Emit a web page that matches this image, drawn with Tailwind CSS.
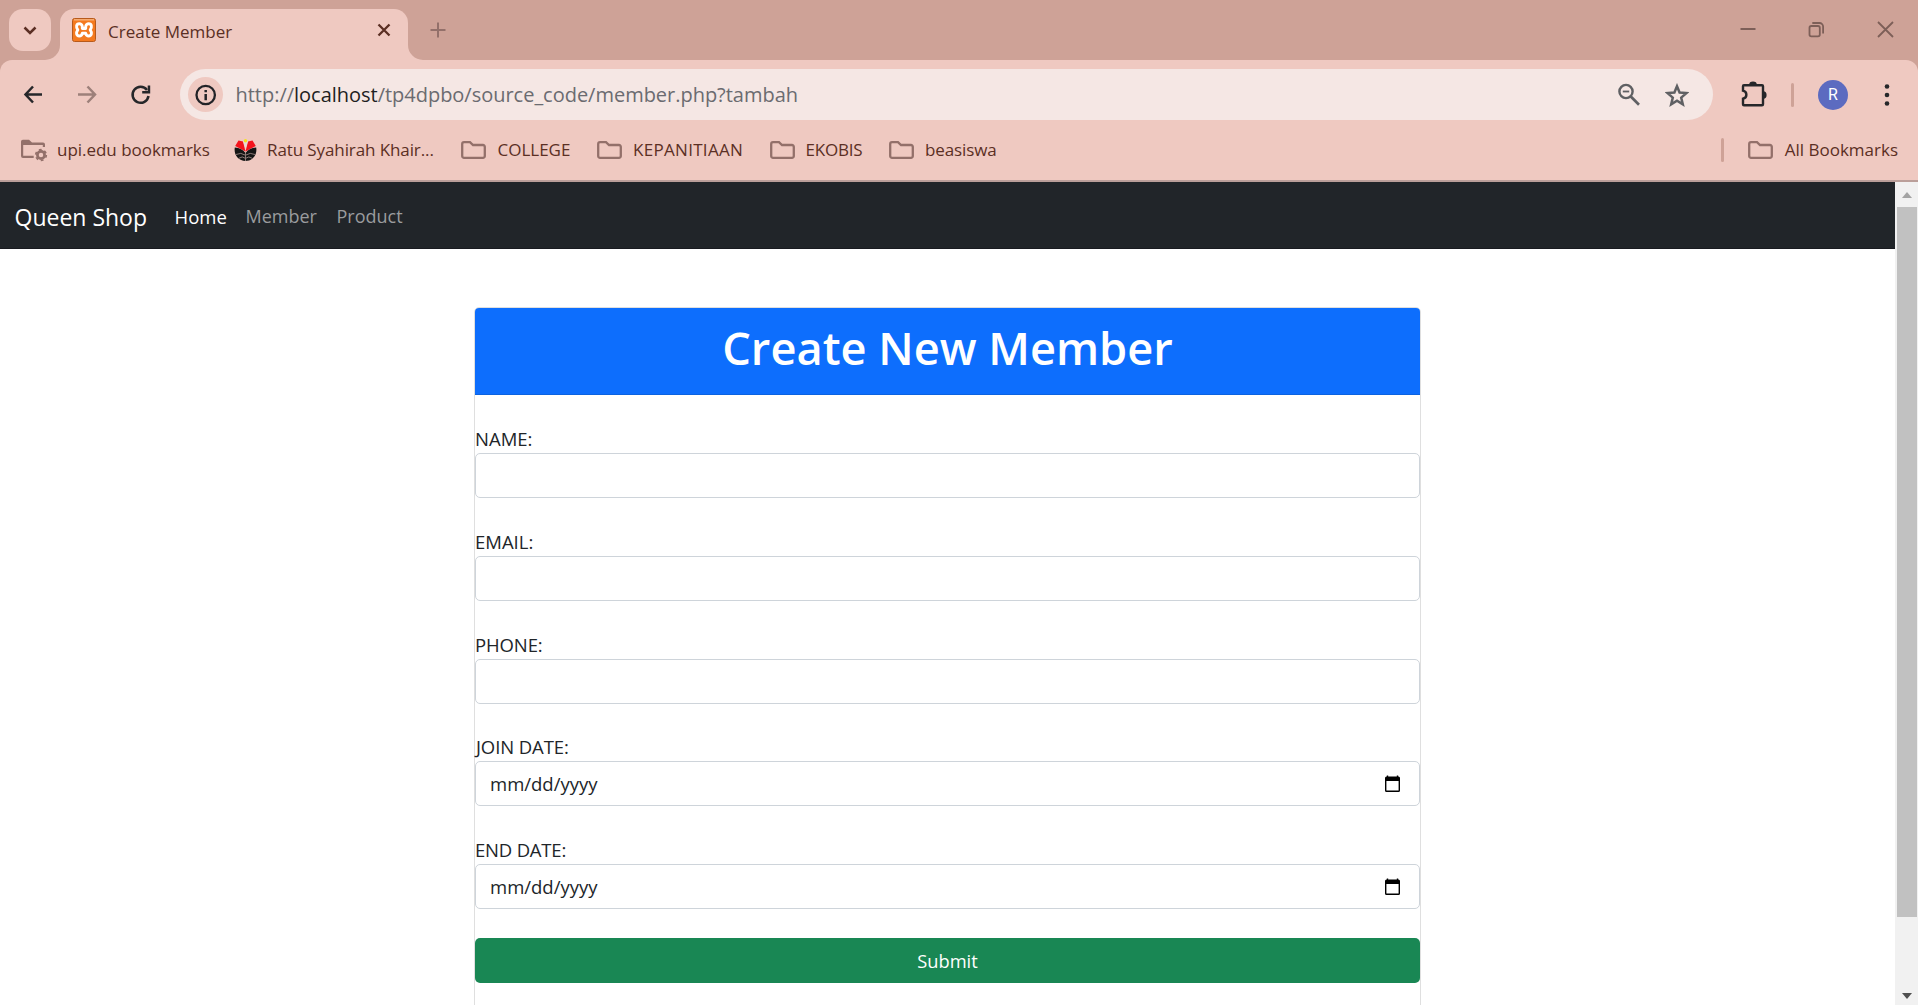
<!DOCTYPE html>
<html lang="en">
<head>
<meta charset="utf-8">
<title>Create Member</title>
<script src="https://cdn.jsdelivr.net/npm/@tailwindcss/browser@4"></script>
</head>
<body class="h-[1005px] w-[1918px] overflow-hidden bg-white font-['Open_Sans',sans-serif] whitespace-nowrap">
<svg class="hidden">
  <symbol id="folder" viewBox="0 0 25 18"><path d="M3 1.2h6l3 2.8h10a1.8 1.8 0 0 1 1.8 1.8V15a1.8 1.8 0 0 1-1.8 1.8H3A1.8 1.8 0 0 1 1.2 15V3A1.8 1.8 0 0 1 3 1.2z" fill="none" stroke="#93706a" stroke-width="2.3"/></symbol>
  <symbol id="calendar" viewBox="0 0 15 18"><path d="M2.5.5v2M12.5.5v2" stroke="#000" stroke-width="1.4"/><path d="M1.500 1.500h12A1.500 1.500 0 0 1 15 3v12.500a1.500 1.500 0 0 1-1.500 1.500h-12A1.500 1.500 0 0 1 0 15.500V3a1.500 1.500 0 0 1 1.500-1.500zM1.400 6v9.600h12.200V6z" fill="#000" fill-rule="evenodd"/></symbol>
</svg>

<!-- Browser tab strip -->
<header class="flex h-[60px] items-start bg-[#cea297] pt-[9px] pl-[9px]">
  <button class="flex size-[42px] items-center justify-center rounded-[14px] bg-[#efc9c1]">
    <svg class="size-[14px]" viewBox="0 0 14 14"><path d="M1.500 4.500 7 10l5.500-5.500" fill="none" stroke="#5b2f24" stroke-width="2.500"/></svg>
  </button>
  <svg class="mt-[36px] ml-[-6px] h-[15px] w-[15px]" viewBox="0 0 15 15"><path d="M15 0v15H0A15 15 0 0 0 15 0z" fill="#efc9c1"/></svg>
  <div class="flex h-[51px] w-[348px] items-start rounded-t-[14px] bg-[#efc9c1] pl-3">
    <svg class="mt-[9px] size-[24px]" viewBox="0 0 24 24">
      <rect x=".5" y=".5" width="23" height="23" rx="2" fill="#f47a20" stroke="#b75a1c"/><path d="M2 1.800h20" stroke="#f8b27a" stroke-width="1.400"/>
      <path d="M10.300 8.300Q9.600 5.800 7.300 5.800C4.200 5.800 3.800 9 5.800 11.900 3.800 14.800 4.200 18 7.300 18Q9.600 18 10.300 15.300h3.400Q14.400 18 16.700 18c3.100 0 3.500-3.200 1.500-6.100 2-2.900 1.600-6.100-1.500-6.100q-2.300 0-3 2.500v2.200h-3.400z" fill="none" stroke="#fff" stroke-width="2.900" stroke-linejoin="round"/>
    </svg>
    <span class="mt-[9px] ml-[12px] w-[269px] text-[17px] leading-[28px] text-[#5b2f24]">Create Member</span>
    <svg class="mt-[14px] size-[14px] shrink-0" viewBox="0 0 14 14"><path d="m1.500 1.500 11 11m0-11-11 11" stroke="#5b2f24" stroke-width="2.300"/></svg>
  </div>
  <svg class="mt-[36px] size-[15px]" viewBox="0 0 15 15"><path d="M0 0v15h15A15 15 0 0 1 0 0z" fill="#efc9c1"/></svg>
  <svg class="mt-[13px] ml-[7px] size-[16px]" viewBox="0 0 16 16"><path d="M8 .5v15M.5 8h15" stroke="#93706a" stroke-width="2"/></svg>
  <div class="mr-[24px] ml-auto flex gap-[52px] pt-[12px] text-[#7d5f58]">
    <svg class="size-[17px]" viewBox="0 0 17 17"><path d="M1.500 8h15" stroke="currentColor" stroke-width="2"/></svg>
    <svg class="size-[17px]" viewBox="0 0 17 17" fill="none" stroke="currentColor" stroke-width="1.800"><rect x="1.500" y="5" width="10.300" height="10.300" rx="1.800"/><path d="M4.300 2h7.200a3.600 3.600 0 0 1 3.600 3.600v7"/></svg>
    <svg class="size-[17px]" viewBox="0 0 17 17"><path d="m1 1 15 15m0-15L1 16" stroke="currentColor" stroke-width="1.800"/></svg>
  </div>
</header>

<!-- Toolbar and bookmarks bar -->
<section class="bg-[#cea297]">
  <div class="h-[122px] rounded-t-[12px] border-b-2 border-[#bb9f9a] bg-[#efc9c1]">
    <div class="flex h-[69px] items-center">
      <svg class="ml-[23px] size-[20px]" viewBox="0 0 20 20"><path d="M10 1.500 2.500 9.500l7.500 8M2.500 9.500H19" fill="none" stroke="#26272a" stroke-width="2.500"/></svg>
      <svg class="ml-[34px] size-[20px]" viewBox="0 0 20 20"><path d="m10.500 1.500 7.500 8-7.500 8M18 9.500H1" fill="none" stroke="#9d807a" stroke-width="2.500"/></svg>
      <svg class="ml-[33px] size-[22px]" viewBox="0 0 22 22"><path d="M18.500 12A8 8 0 1 1 17 6" fill="none" stroke="#26272a" stroke-width="2.500"/><path d="M20.200 1.500v8h-8V7h5.500V1.500z" fill="#26272a"/></svg>
      <div class="ml-[28px] flex h-[51px] w-[1533px] items-center rounded-full bg-[#f5e7e4]">
        <span class="ml-[8px] flex size-[35px] items-center justify-center rounded-full bg-[#efc9c1]">
          <svg class="size-[22px]" viewBox="0 0 22 22"><circle cx="10.700" cy="11" r="9.200" fill="none" stroke="#222327" stroke-width="2.300"/><path d="M10.700 10v6.200M10.700 6v2.200" stroke="#222327" stroke-width="2.500"/></svg>
        </span>
        <span class="ml-[12.500px] text-[20px] leading-[28px] tracking-[-0.02px] text-[#6b6b70]">http://<span class="text-[#1f1f22]">localhost</span>/tp4dpbo/source_code/member.php?tambah</span>
        <svg class="mr-[24px] ml-auto size-[24px]" viewBox="0 0 24 24" fill="none" stroke="#5f6063"><circle cx="9" cy="8.500" r="6.600" stroke-width="2.400"/><path d="m13.800 13.500 8.200 8.200" stroke-width="2.700"/><path d="M5.800 8.500h6.400" stroke-width="1.800"/></svg>
        <svg class="mr-[24px] size-[24px]" viewBox="0 0 24 24"><path d="m12 3.200 2.600 6.300 6.800.6-5.200 4.500 1.600 6.700-5.800-3.600-5.800 3.600 1.600-6.700-5.200-4.500 6.800-.6z" fill="none" stroke="#5f6063" stroke-width="2.500"/></svg>
      </div>
      <svg class="ml-[27px] size-[28px]" viewBox="0 0 28 28"><path d="M4 4.200h18a1 1 0 0 1 1 1v18a1 1 0 0 1-1 1H4a1 1 0 0 1-1-1v-5.500c4.500-1 4.500-7 0-8V5.200a1 1 0 0 1 1-1z" fill="none" stroke="#26272a" stroke-width="2.400"/><path d="M9.200 3.700a3.800 3.300 0 0 1 7.600 0zM23.300 10.300a3.300 3.800 0 0 1 0 7.600z" fill="#26272a"/></svg>
      <span class="ml-[23px] h-[24px] w-[3px] rounded-full bg-[#cea297]"></span>
      <span class="ml-[24px] flex size-[30px] items-center justify-center rounded-full bg-[#5c6bc0] font-[Roboto] text-[16px] text-white">R</span>
      <svg class="ml-[34px] h-[24px] w-[10px]" viewBox="0 0 10 24" fill="#26272a"><circle cx="5" cy="3.500" r="2.300"/><circle cx="5" cy="12" r="2.300"/><circle cx="5" cy="20.500" r="2.300"/></svg>
    </div>
    <div class="flex h-[42px] items-center text-[17px] leading-[24px] text-[#5b2f24]">
      <div class="flex w-[213px] items-center pl-[20px]">
        <svg class="mt-[2px] h-[24px] w-[28px]" viewBox="0 0 28 24"><path d="M1 2.500A1.800 1.800 0 0 1 2.800.8H9L12 3.500h11a2 2 0 0 1 2 2V8h-2.200V6H3.200v10.800h10.500V19H3a2 2 0 0 1-2-2z" fill="#93706a"/><circle cx="21" cy="16" r="3.600" fill="none" stroke="#93706a" stroke-width="2.700"/><circle cx="21" cy="16" r="5.300" fill="none" stroke="#93706a" stroke-width="1.700" stroke-dasharray="2.780"/></svg>
        <span class="ml-[9px] tracking-[-0.03px]">upi.edu bookmarks</span>
      </div>
      <div class="flex w-[248px] items-center pl-[21px]">
        <svg class="size-[23px]" viewBox="0 0 23 23"><path d="M4.500 1.500 9 2.500l2.500 10L1.200 7zM18.500 1.500 14 2.500l-2.500 10L21.800 7z" fill="#f3141d"/><path d="m9 2 2.500 8L14 2z" fill="#e9d9d4"/><circle cx="11.500" cy="1.800" r="1.700" fill="#f4e31d"/><path d="M.8 8.500Q8 9 11.500 14 15 9 22.200 8.500C23.500 16 18.500 22 11.500 22S-.5 16 .8 8.500z" fill="#151515"/><path d="M2 15.500q5-2.500 9 .5M5 19.200q3.500-2.500 6 0M21 15.500q-5-2.500-9 .5M18 19.200q-3.500-2.500-6 0M11.500 14v8" fill="none" stroke="#a8938e" stroke-width=".8"/></svg>
        <span class="ml-[10px] tracking-[-0.1px]">Ratu Syahirah Khair...</span>
      </div>
      <div class="flex w-[135.500px] items-center"><svg class="h-[18px] w-[25px]"><use href="#folder"/></svg><span class="ml-[11.500px]">COLLEGE</span></div>
      <div class="flex w-[173px] items-center"><svg class="h-[18px] w-[25px]"><use href="#folder"/></svg><span class="ml-[11.500px] tracking-[0.3px]">KEPANITIAAN</span></div>
      <div class="flex w-[119.500px] items-center"><svg class="h-[18px] w-[25px]"><use href="#folder"/></svg><span class="ml-[11px] tracking-[-0.2px]">EKOBIS</span></div>
      <div class="flex items-center"><svg class="h-[18px] w-[25px]"><use href="#folder"/></svg><span class="ml-[11px] tracking-[-0.1px]">beasiswa</span></div>
      <div class="mr-[20px] ml-auto flex items-center"><span class="mr-[24px] h-[24px] w-[3px] rounded-full bg-[#cea297]"></span><svg class="h-[18px] w-[25px]"><use href="#folder"/></svg><span class="ml-[12px]">All Bookmarks</span></div>
    </div>
  </div>
</section>

<!-- Page viewport -->
<div class="flex h-[823px]">
  <main class="w-[1895px] overflow-hidden bg-white">
    <nav class="flex h-[67px] items-center border-b border-[#191b20] bg-[#212529] text-[18px]">
      <a class="mt-[5px] ml-[14.500px] w-[160px] text-[23px] text-white">Queen Shop</a>
      <a class="mt-[3px] w-[71px] text-[18.500px] text-white">Home</a>
      <a class="mt-[3px] w-[91px] text-[#9a9c9e]">Member</a>
      <a class="mt-[3px] text-[#9a9c9e]">Product</a>
    </nav>
    <form class="mx-auto mt-[58px] h-[900px] w-[947px] rounded-[5px] border border-[#dfdfdf] text-[#212529]">
      <h1 class="h-[87.250px] rounded-t-[4px] border-b border-[#0c63e0] bg-[#0d6efd] pt-[10px] text-center text-[45.200px] leading-[60px] font-semibold text-white">Create New Member</h1>
      <div class="grid auto-rows-[102.750px]">
        <div class="flex flex-col justify-end text-[18.500px]"><label class="leading-[29px]">NAME:</label><div class="h-[45px] rounded-[5px] border border-[#ced4da] bg-white"></div></div>
        <div class="flex flex-col justify-end text-[18.500px]"><label class="leading-[29px]">EMAIL:</label><div class="h-[45px] rounded-[5px] border border-[#ced4da] bg-white"></div></div>
        <div class="flex flex-col justify-end text-[18.500px]"><label class="leading-[29px] tracking-[-0.1px]">PHONE:</label><div class="h-[45px] rounded-[5px] border border-[#ced4da] bg-white"></div></div>
        <div class="flex flex-col justify-end text-[18.500px]"><label class="pl-[1px] leading-[29px] tracking-[-0.1px]">JOIN DATE:</label><div class="flex h-[45px] items-center justify-between rounded-[5px] border border-[#ced4da] bg-white pr-[19px] pl-[14px]"><span class="pt-px">mm/dd/yyyy</span><svg class="h-[18px] w-[15px]"><use href="#calendar"/></svg></div></div>
        <div class="flex flex-col justify-end text-[18.500px]"><label class="leading-[29px] tracking-[-0.2px]">END DATE:</label><div class="flex h-[45px] items-center justify-between rounded-[5px] border border-[#ced4da] bg-white pr-[19px] pl-[14px]"><span class="pt-px">mm/dd/yyyy</span><svg class="h-[18px] w-[15px]"><use href="#calendar"/></svg></div></div>
      </div>
      <button type="button" class="mt-[29px] block h-[45px] w-full rounded-[5px] bg-[#198754] pt-px text-[18.300px] text-white">Submit</button>
    </form>
  </main>
  <aside class="flex w-[23px] flex-col items-center bg-[#f1f1f1]">
    <svg class="mt-[10px] h-[6px] w-[10px] shrink-0" viewBox="0 0 10 6"><path d="M0 6 5 0l5 6z" fill="#a3a3a3"/></svg>
    <div class="mt-[9px] h-[710px] w-[20px] shrink-0 bg-[#c1c1c1]"></div>
    <svg class="mt-[76px] h-[6px] w-[10px] shrink-0" viewBox="0 0 10 6"><path d="m0 0 5 6 5-6z" fill="#505050"/></svg>
  </aside>
</div>
</body>
</html>
